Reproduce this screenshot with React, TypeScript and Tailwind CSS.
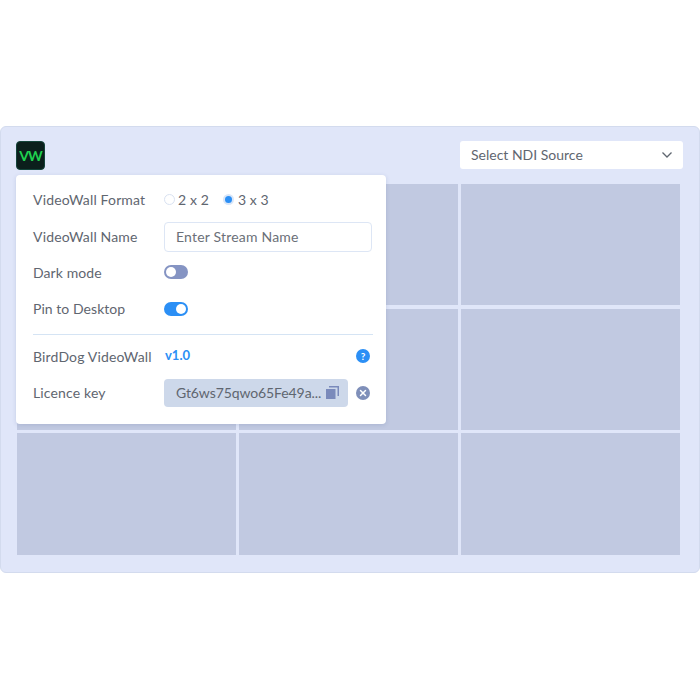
import { X } from "lucide-react";

const tiles = [1, 2, 3, 4, 5, 6, 7, 8, 9];

const Row = ({ label, children, track = "tracking-[0.15px]" }: { label: string; children: React.ReactNode; track?: string }) => (
  <div className="flex items-center h-[36.4px]">
    <div className={`w-[131px] shrink-0 text-[#5f6670] ${track}`}>{label}</div>
    {children}
  </div>
);

const App = () => {
  return (
    <div className="w-[700px] h-[700px] bg-white pt-[126px] font-['Lato',sans-serif] text-[14px]">
      <div className="relative h-[447px] w-[700px] rounded-[6px] border border-[#d3dbee] bg-[#e0e6f9] pl-[16px] pr-[16px] pt-[14px]">
        <div className="flex justify-between items-start h-[43px]">
          <div className="-ml-[1px] w-[29px] h-[29px] rounded-[4px] bg-[#0b1f1c] border border-[#14443a] flex items-center justify-center text-[#1fd14f] font-bold text-[14px] tracking-[-1px]">
            VW
          </div>
          <div className="w-[223px] h-[28px] rounded-[3px] bg-white flex items-center justify-between pl-[11px] pr-[10px] text-[#5f6670]">
            <span className="-mt-[1px]">Select NDI Source</span>
            <svg width="12" height="8" viewBox="0 0 12 8" fill="none" stroke="#5f6670" strokeWidth="1.3">
              <path d="M1.5 1.5 6 6l4.5-4.5" />
            </svg>
          </div>
        </div>

        <div className="grid grid-cols-[219px_219px_219px] grid-rows-[121px_121px_122px] gap-x-[3px] gap-y-[3.5px]">
          {tiles.map((t) => (
            <div key={t} className="bg-[#c1c9e1]" />
          ))}
        </div>

        <div className="absolute left-[15px] top-[48px] w-[370px] h-[249px] rounded-[4px] bg-white shadow-[0_1px_4px_rgba(80,100,150,0.2)] pl-[17px] pr-[13px] pt-[6.5px]">
          <Row label="VideoWall Format">
            <div className="flex items-center text-[#5f6670]">
              <span className="w-[11px] h-[11px] rounded-full border border-[#d9e2f2] bg-white" />
              <span className="ml-[3px] tracking-[0.1px]">2 x 2</span>
              <span className="ml-[14px] w-[11px] h-[11px] rounded-full bg-[#d9e6f8] flex items-center justify-center">
                <span className="w-[7px] h-[7px] rounded-full bg-[#2b8ff5]" />
              </span>
              <span className="ml-[4px] tracking-[0.1px]">3 x 3</span>
            </div>
          </Row>
          <Row label="VideoWall Name">
            <div className="mt-[1px] w-[208px] h-[30px] rounded-[4px] border border-[#dde6f5] flex items-center pl-[11px] text-[#6b7078] tracking-[0.2px]">
              Enter Stream Name
            </div>
          </Row>
          <Row label="Dark mode" track="tracking-[0.1px]">
            <div className="w-[24px] h-[14px] rounded-full bg-[#8594c3] flex items-center pl-[2px]">
              <span className="w-[10px] h-[10px] rounded-full bg-white" />
            </div>
          </Row>
          <Row label="Pin to Desktop" track="tracking-[0.05px]">
            <div className="w-[24px] h-[14px] rounded-full bg-[#2b8ff5] flex items-center justify-end pr-[2px]">
              <span className="w-[10px] h-[10px] rounded-full bg-white" />
            </div>
          </Row>
          <div className="h-px bg-[#d5e4f4] mt-[7px] mb-[3px]" />
          <Row label="BirdDog VideoWall">
            <span className="ml-[1px] -mt-[1px] font-bold text-[13px] text-[#2b8ff5]">v1.0</span>
            <span className="ml-auto mr-[3px] w-[14px] h-[14px] rounded-full bg-[#2b8ff5] flex items-center justify-center text-white text-[10px] font-bold">
              ?
            </span>
          </Row>
          <Row label="Licence key">
            <div className="w-[184px] h-[28px] rounded-[4px] bg-[#cdd8ea] flex items-center justify-between pl-[12px] pr-[9px] text-[#5f6670] tracking-[-0.1px]">
              <span>Gt6ws75qwo65Fe49a...</span>
              <svg width="13" height="13" viewBox="0 0 13 13" fill="none">
                <rect x="0" y="3" width="9.5" height="10" fill="#7a8abb" />
                <path d="M3 .75h9.25V10" stroke="#7a8abb" strokeWidth="1.5" />
              </svg>
            </div>
            <span className="ml-auto mr-[3px] w-[14px] h-[14px] rounded-full bg-[#7f8fb9] flex items-center justify-center">
              <X size={10} strokeWidth={3.5} className="text-white" />
            </span>
          </Row>
        </div>
      </div>
    </div>
  );
};

export default App;
